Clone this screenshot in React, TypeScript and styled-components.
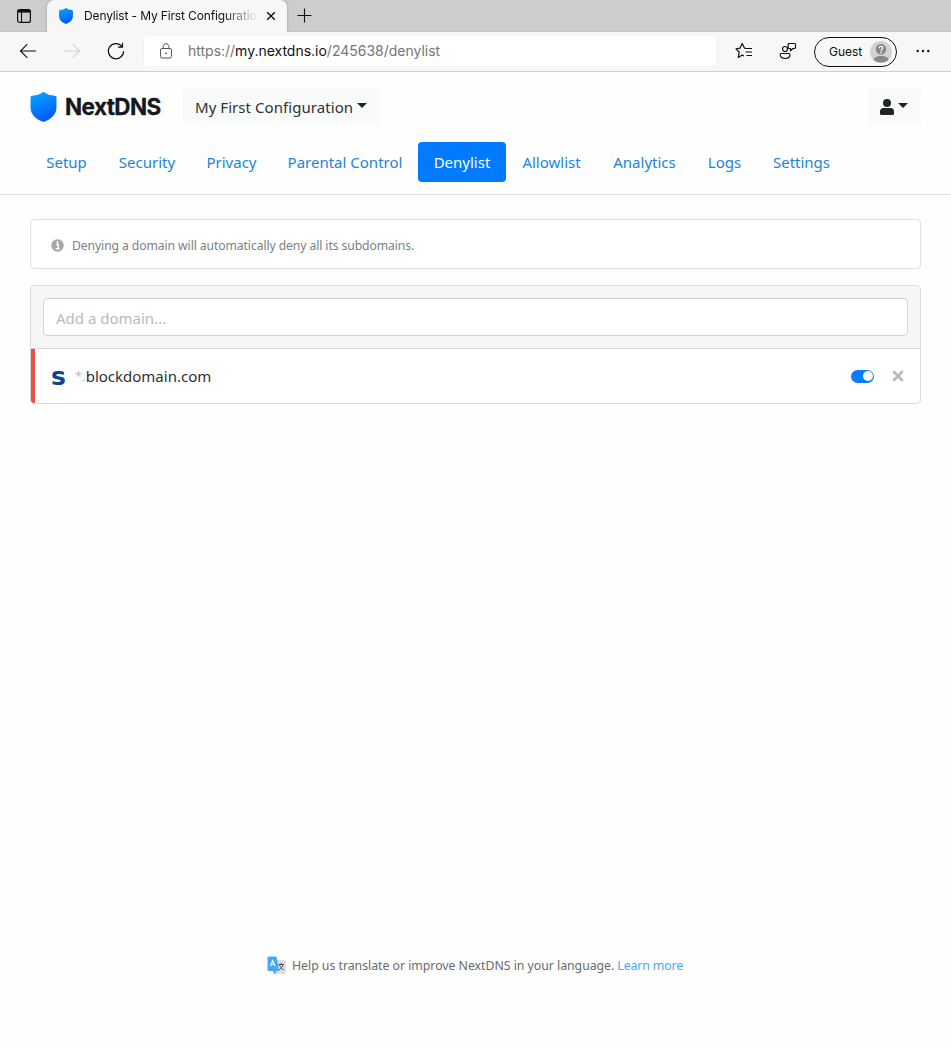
import React from 'react';
import styled, { createGlobalStyle } from 'styled-components';

const GlobalStyle = createGlobalStyle`
  * { box-sizing: border-box; }
  body { margin: 0; background: #fefefe; font-family: "Noto Sans", sans-serif; color: #2c3136; }
  svg { display: block; flex: none; }
`;

const Page = styled.div`
  display: flex;
  flex-direction: column;
  height: 1048px;
  overflow: hidden;
`;

const TabStrip = styled.div`
  display: flex;
  height: 32px;
  background: #cdcdcd;
  border-bottom: 1px solid #c2c2c2;
  font-family: Inter, sans-serif;
`;

const TabMenu = styled.div`
  width: 47px;
  padding: 9px 0 0 17px;
`;

const Tab = styled.div`
  display: flex;
  align-items: center;
  width: 240px;
  height: 32px;
  padding: 0 11px 0 12px;
  background: #f7f7f7;
  border-radius: 7px 7px 0 0;
  box-shadow: 0 0 3px rgba(0, 0, 0, 0.25);
`;

const TabTitle = styled.div`
  width: 174px;
  margin: 0 8px 0 11px;
  white-space: nowrap;
  font-size: 12px;
  line-height: 18px;
  letter-spacing: -0.14px;
  color: #111;
  mask-image: linear-gradient(90deg, #000 138px, transparent 174px);
`;

const NewTab = styled.div`
  padding: 8px 0 0 10px;
`;

const Toolbar = styled.div`
  display: flex;
  align-items: center;
  height: 40px;
  padding-bottom: 1px;
  background: #f7f7f7;
  border-bottom: 1px solid #cfcfcf;
  font-family: Inter, sans-serif;
`;

const NavButtons = styled.div`
  display: flex;
  align-items: center;
  gap: 26px;
  width: 144px;
  padding-left: 19px;
`;

const AddressBar = styled.div`
  display: flex;
  align-items: center;
  width: 572px;
  height: 30px;
  padding-left: 15px;
  background: #fff;
  border-radius: 4px;
  box-shadow: 0 0 2px rgba(0, 0, 0, 0.06);
`;

const Url = styled.span`
  margin-left: 15px;
  font-size: 14px;
  line-height: 20px;
  letter-spacing: -0.01px;
  color: #757575;
`;

const Host = styled.span`
  color: #111;
`;

const ToolbarActions = styled.div`
  display: flex;
  align-items: center;
  margin-left: 19px;
`;

const Guest = styled.div`
  display: flex;
  align-items: center;
  justify-content: space-between;
  width: 83px;
  height: 30px;
  margin: 1px 19px 0 17px;
  padding: 0 4px 0 14px;
  border: 1px solid #111;
  border-radius: 15px;
  font-size: 12px;
  letter-spacing: -0.05px;
  color: #111;
`;

const Header = styled.header`
  height: 123px;
  padding: 15px 30px 0;
  border-bottom: 1px solid #dcdfe1;
`;

const Brand = styled.div`
  display: flex;
  align-items: center;
  height: 39px;
`;

const BrandName = styled.div`
  width: 117px;
  margin-left: 8px;
  font-family: Inter, sans-serif;
  font-weight: 700;
  font-size: 22.5px;
  line-height: 30px;
  letter-spacing: -0.6px;
  color: #14181c;
  -webkit-text-stroke: 0.3px #14181c;
`;

const DropButton = styled.div<{ $w: number }>`
  display: flex;
  align-items: center;
  gap: 4px;
  width: ${(p) => p.$w}px;
  height: 38px;
  padding: 0 12px 0 13px;
  border-radius: 4px;
  background: #f9fbfb;
  font-size: 15px;
  letter-spacing: 0.06px;
  white-space: nowrap;
`;

const Spacer = styled.div`
  flex: 1;
`;

const Caret = styled.span`
  width: 0;
  height: 0;
  margin-top: -2px;
  border-top: 5px solid #212529;
  border-left: 5px solid transparent;
  border-right: 5px solid transparent;
`;

const Tabs = styled.nav`
  display: flex;
  margin-top: 16px;
`;

const TabLink = styled.a<{ $w: number; $active?: boolean }>`
  width: ${(p) => p.$w}px;
  height: 40px;
  border-radius: 4px;
  background: ${(p) => (p.$active ? '#007bff' : 'transparent')};
  color: ${(p) => (p.$active ? '#fff' : '#1b84df')};
  font-size: 15px;
  line-height: 40px;
  text-align: center;
  white-space: nowrap;
`;

const Main = styled.main`
  padding: 24px 30px 0;
`;

const Notice = styled.div`
  display: flex;
  align-items: center;
  height: 50px;
  padding: 2px 20px 0;
  border: 1px solid #dfe0e1;
  border-radius: 4px;
  background: #fff;
  color: #7b8084;
  font-size: 12.2px;
  letter-spacing: -0.1px;
  gap: 8px;
`;

const List = styled.section`
  margin-top: 16px;
  height: 119px;
  border: 1px solid #dbdddd;
  border-radius: 4px;
  background: #fff;
  overflow: hidden;
`;

const ListHead = styled.div`
  height: 63px;
  padding: 12px;
  background: #f6f6f6;
  border-bottom: 1px solid #d7d8d9;
`;

const DomainInput = styled.input`
  display: block;
  width: 100%;
  height: 38px;
  padding: 2px 12px 0;
  border: 1px solid #ced4da;
  border-radius: 4px;
  background: #fff;
  font: 15px "Noto Sans", sans-serif;
  &::placeholder { color: #b7babd; opacity: 1; }
`;

const DomainRow = styled.div`
  display: flex;
  align-items: center;
  height: 54px;
  padding: 0 16px;
  border-left: 4px solid #ee4b46;
`;

const Favicon = styled.span`
  width: 16px;
  height: 30px;
  font: bold 25px/31px "DejaVu Sans", sans-serif;
  color: #064591;
`;

const Wildcard = styled.span`
  margin-left: 8px;
  color: #bcbcbc;
  font-size: 13px;
  line-height: 24px;
`;

const Domain = styled.span`
  font-size: 15px;
  line-height: 24px;
`;

const Switch = styled.div`
  display: flex;
  justify-content: flex-end;
  width: 23px;
  height: 13px;
  padding: 1.5px;
  margin-right: 18px;
  border-radius: 7px;
  background: #0a7cff;
`;

const Knob = styled.span`
  width: 10px;
  height: 10px;
  border-radius: 50%;
  background: #fff;
`;

const Footer = styled.footer`
  display: flex;
  align-items: center;
  margin: auto 0 72px;
  padding-left: 267px;
  height: 22px;
  font-size: 12.3px;
  letter-spacing: -0.025px;
  color: #6a6a6a;
  white-space: nowrap;
`;

const FooterText = styled.span`
  margin-left: 6px;
`;

const LearnMore = styled.a`
  margin-left: 3px;
  letter-spacing: -0.1px;
  color: #4da9f2;
`;

const Shield = ({ w, h, id }: { w: number; h: number; id: string }) => (
  <svg width={w} height={h} viewBox="0 0 26 30">
    <defs>
      <linearGradient id={id} x1="0.2" y1="0" x2="0.55" y2="1">
        <stop offset="0" stopColor="#08a4ff" />
        <stop offset="1" stopColor="#0056fb" />
      </linearGradient>
    </defs>
    <path d="M13 0C14 0 15 1.4 17 2.2C20 3.4 26 3.2 26 5V15C26 22 21.500 27 13 30C4.500 27 0 22 0 15V5C0 3.200 6 3.400 9 2.200C11 1.400 12 0 13 0Z" fill={`url(#${id})`} />
  </svg>
);

const links: [string, number][] = [
  ['Setup', 73],
  ['Security', 88],
  ['Privacy', 81],
  ['Parental Control', 146],
  ['Denylist', 88],
  ['Allowlist', 91],
  ['Analytics', 95],
  ['Logs', 65],
  ['Settings', 89],
];

export default function App() {
  return (
    <Page>
      <GlobalStyle />
      <TabStrip>
        <TabMenu>
          <svg width="14" height="14" viewBox="0 0 14 14" fill="none" stroke="#111">
            <rect x="0.6" y="0.6" width="12.8" height="12.800" rx="2" strokeWidth="1.200" />
            <path d="M1 2.300H13" strokeWidth="2.600" />
            <path d="M4.500 3V13" strokeWidth="1.100" />
          </svg>
        </TabMenu>
        <Tab>
          <Shield w={14} h={16} id="tab-shield" />
          <TabTitle>Denylist - My First Configuration</TabTitle>
          <svg width="10" height="10" viewBox="0 0 10 10" stroke="#111" strokeWidth="1.400">
            <path d="M1.200 1.200L8.800 8.800M8.800 1.200L1.200 8.800" />
          </svg>
        </Tab>
        <NewTab>
          <svg width="15" height="15" viewBox="0 0 15 15" stroke="#111">
            <path d="M0.500 7.500H14.500M7.500 0.500V14.500" strokeWidth="1.100" />
          </svg>
        </NewTab>
      </TabStrip>
      <Toolbar>
        <NavButtons>
          <svg width="18" height="16" viewBox="0 0 18 16" fill="none" stroke="#111" strokeWidth="1.100">
            <path d="M17 8H1.500M8.300 1.200L1.500 8L8.300 14.800" />
          </svg>
          <svg width="18" height="16" viewBox="0 0 18 16" fill="none" stroke="#d2d2d2" strokeWidth="1.100">
            <path d="M1 8H16.500M9.700 1.200L16.500 8L9.700 14.800" />
          </svg>
          <svg width="18" height="18" viewBox="0 0 18 18" fill="none" stroke="#111" strokeWidth="1.200">
            <path d="M15.200 4.800A7.600 7.600 0 1 0 16.600 9.200M15.500 0.800V5.200H11" />
          </svg>
        </NavButtons>
        <AddressBar>
          <svg width="14" height="16" viewBox="0 0 14 16" fill="none" stroke="#555">
            <rect x="1.500" y="5.500" width="11" height="9.500" rx="1.500" />
            <path d="M4.200 5.500V3.500C4.200 -0.200 9.800 -0.200 9.800 3.500V5.500" />
            <circle cx="7" cy="10.300" r="0.900" fill="#555" stroke="none" />
          </svg>
          <Url>https://<Host>my.nextdns.io</Host>/245638/denylist</Url>
        </AddressBar>
        <ToolbarActions>
          <svg width="18" height="18" viewBox="0 0 18 18" fill="none" stroke="#111" strokeWidth="1.200" strokeLinejoin="round">
            <path d="M11 6.400L9.400 6.100L7.200 1.500L5 6.200L1 6.800L4.200 10L3.300 15.500L7.200 13L9 14M11 6.500H17M10.500 10H17M11.500 13.500H17" />
          </svg>
          <svg style={{ marginLeft: 26 }} width="18" height="18" viewBox="0 0 18 18" fill="none" stroke="#111" strokeWidth="1.200" strokeLinejoin="round">
            <circle cx="6" cy="7" r="2.500" />
            <path d="M2.200 11.500H10C10.600 11.500 11 12 11 12.600C11 15.300 8.800 16.500 6.100 16.500C3.300 16.500 1.200 15.300 1.200 12.600C1.200 12 1.600 11.500 2.200 11.500ZM10.200 1.500H15.500Q16.500 1.500 16.500 2.500V5.500Q16.500 6.500 15.500 6.500H14L11.500 8.800V6.500H10.200Q9.200 6.500 9.200 5.500V2.500Q9.200 1.500 10.200 1.500Z" />
          </svg>
          <Guest>
            Guest
            <svg width="22" height="22" viewBox="0 0 22 22">
              <circle cx="11" cy="11" r="11" fill="#d3d2d0" />
              <path d="M3.500 18.800C4.500 13.800 17.500 13.800 18.500 18.800C15 22.500 7 22.500 3.500 18.800Z" fill="#898785" />
              <circle cx="11" cy="8.300" r="5.200" fill="#898785" />
              <path d="M9.200 7.200C9.200 4.600 12.900 4.800 12.800 7C12.700 8.200 11 8.200 11 9.700" fill="none" stroke="#fff" strokeWidth="1.200" />
              <circle cx="11" cy="11.400" r="0.800" fill="#fff" />
            </svg>
          </Guest>
          <svg width="14" height="4" viewBox="0 0 14 4" fill="#111">
            <circle cx="1.700" cy="2" r="1.200" />
            <circle cx="7" cy="2" r="1.200" />
            <circle cx="12.300" cy="2" r="1.200" />
          </svg>
        </ToolbarActions>
      </Toolbar>
      <Header>
        <Brand>
          <Shield w={27} h={30} id="brand-shield" />
          <BrandName>NextDNS</BrandName>
          <DropButton $w={198}>My First Configuration<Caret /></DropButton>
          <Spacer />
          <DropButton $w={54}>
            <svg width="14" height="16" viewBox="0 0 14 16" fill="#212529">
              <circle cx="7" cy="4" r="4" />
              <path d="M3.500 9H10.500Q14 9 14 12.500V14.500Q14 16 12.500 16H1.500Q0 16 0 14.500V12.500Q0 9 3.500 9Z" />
            </svg>
            <Caret />
          </DropButton>
        </Brand>
        <Tabs>
          {links.map(([label, w]) => (
            <TabLink key={label} $w={w} $active={label === 'Denylist'}>{label}</TabLink>
          ))}
        </Tabs>
      </Header>
      <Main>
        <Notice>
          <svg width="13" height="13" viewBox="0 0 13 13">
            <circle cx="6.500" cy="6.500" r="6.200" fill="#a6a9ac" />
            <path d="M5 5.500H7.200V9.500M4.800 9.700H8.500" stroke="#fff" strokeWidth="1.400" fill="none" />
            <circle cx="6.500" cy="3.300" r="1.100" fill="#fff" />
          </svg>
          <span>Denying a domain will automatically deny all its subdomains.</span>
        </Notice>
        <List>
          <ListHead>
            <DomainInput placeholder="Add a domain..." />
          </ListHead>
          <DomainRow>
            <Favicon>s</Favicon>
            <Wildcard>*.</Wildcard>
            <Domain>blockdomain.com</Domain>
            <Spacer />
            <Switch><Knob /></Switch>
            <svg width="12" height="12" viewBox="0 0 12 12" stroke="#b9b9b9" strokeWidth="2.600" strokeLinecap="round">
              <path d="M2 2L10 10M10 2L2 10" />
            </svg>
          </DomainRow>
        </List>
      </Main>
      <Footer>
        <svg width="19" height="19" viewBox="0 0 19 19">
          <path d="M7 4H17Q19 4 19 6V16Q19 18 17 18H8Z" fill="#dbe0e8" />
          <path d="M2 0.500H8Q9.800 0.500 10 2.500L12 15H9.500L7.500 18.500L6 15H2Q0.500 15 0.500 13.500V2Q0.500 0.500 2 0.500Z" fill="#45a9f5" />
          <path d="M3.500 10L5.700 4.500L8 10M4.400 8.200H7.200" fill="none" stroke="#fff" strokeWidth="1.100" />
          <path d="M11.500 8.500H17M14.200 7V8.500M16 8.500C15.500 11 14 13 11.800 14M12.500 8.500C13 11 15 13 17 14" fill="none" stroke="#4c535e" strokeWidth="1" />
        </svg>
        <FooterText>Help us translate or improve NextDNS in your language.</FooterText>
        <LearnMore>Learn more</LearnMore>
      </Footer>
    </Page>
  );
}
